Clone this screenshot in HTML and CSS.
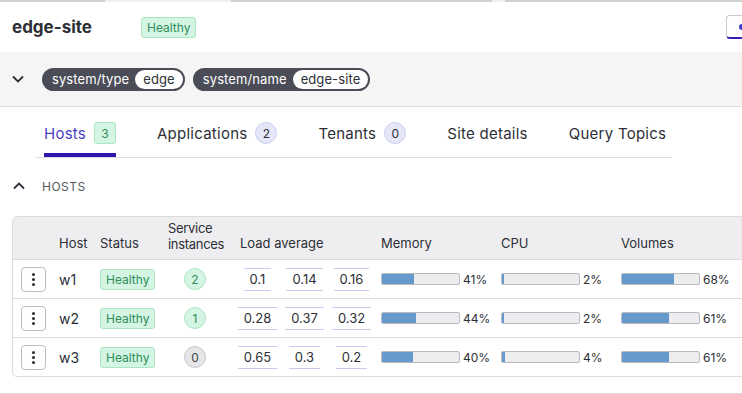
FILE: index.html
```html
<!DOCTYPE html>
<html lang="en">
<head>
    <meta charset="UTF-8">
    <meta name="viewport" content="width=device-width, initial-scale=1.0">
    <title>edge-site</title>
    <link rel="stylesheet" href="styles.css">
</head>
<body>
    <div class="top-strip">
        <span class="seg dark" style="width: 105px"></span>
        <span class="seg light" style="width: 126px"></span>
        <span class="seg dark" style="width: 261px"></span>
        <span class="seg light" style="width: 13px"></span>
        <span class="seg dark fill"></span>
    </div>

    <header class="site-head">
        <h1>edge-site</h1>
        <span class="badge ok">Healthy</span>
        <button class="corner-btn"><span class="dot"></span></button>
    </header>

    <div class="labels">
        <svg class="chev" width="12" height="8" viewBox="0 0 12 8"><polyline points="1,1.5 6,6.5 11,1.5" fill="none" stroke="#2d2f36" stroke-width="1.8"/></svg>
        <span class="chip"><span class="key">system/type</span><span class="val">edge</span></span>
        <span class="chip"><span class="key">system/name</span><span class="val">edge-site</span></span>
    </div>

    <nav class="tabs">
        <a class="tab active">Hosts <span class="count square">3</span></a>
        <a class="tab">Applications <span class="count round">2</span></a>
        <a class="tab">Tenants <span class="count round">0</span></a>
        <a class="tab">Site details</a>
        <a class="tab">Query Topics</a>
    </nav>

    <section class="hosts">
        <div class="section-title">
            <svg class="chev" width="12" height="8" viewBox="0 0 12 8"><polyline points="1,6.5 6,1.5 11,6.5" fill="none" stroke="#2d2f36" stroke-width="1.8"/></svg>
            <span>HOSTS</span>
        </div>

        <div class="grid">
            <div class="row head">
                <div class="cell"></div>
                <div class="cell">Host</div>
                <div class="cell">Status</div>
                <div class="cell tight">Service<br>instances</div>
                <div class="cell span3">Load average</div>
                <div class="cell">Memory</div>
                <div class="cell">CPU</div>
                <div class="cell">Volumes</div>
                <div class="cell"></div>
            </div>

            <div class="row">
                <div class="cell"><button class="menu"><i></i><i></i><i></i></button></div>
                <div class="cell host">w1</div>
                <div class="cell"><span class="badge ok">Healthy</span></div>
                <div class="cell"><span class="circle ok">2</span></div>
                <div class="cell load"><span>0.1</span></div>
                <div class="cell load"><span>0.14</span></div>
                <div class="cell load"><span>0.16</span></div>
                <div class="cell"><span class="bar"><span class="fill" style="width: 41%"></span></span><span class="pct">41%</span></div>
                <div class="cell"><span class="bar"><span class="fill" style="width: 2%"></span></span><span class="pct">2%</span></div>
                <div class="cell"><span class="bar"><span class="fill" style="width: 68%"></span></span><span class="pct">68%</span></div>
                <div class="cell"></div>
            </div>

            <div class="row">
                <div class="cell"><button class="menu"><i></i><i></i><i></i></button></div>
                <div class="cell host">w2</div>
                <div class="cell"><span class="badge ok">Healthy</span></div>
                <div class="cell"><span class="circle ok">1</span></div>
                <div class="cell load"><span>0.28</span></div>
                <div class="cell load"><span>0.37</span></div>
                <div class="cell load"><span>0.32</span></div>
                <div class="cell"><span class="bar"><span class="fill" style="width: 44%"></span></span><span class="pct">44%</span></div>
                <div class="cell"><span class="bar"><span class="fill" style="width: 2%"></span></span><span class="pct">2%</span></div>
                <div class="cell"><span class="bar"><span class="fill" style="width: 61%"></span></span><span class="pct">61%</span></div>
                <div class="cell"></div>
            </div>

            <div class="row">
                <div class="cell"><button class="menu"><i></i><i></i><i></i></button></div>
                <div class="cell host">w3</div>
                <div class="cell"><span class="badge ok">Healthy</span></div>
                <div class="cell"><span class="circle zero">0</span></div>
                <div class="cell load"><span>0.65</span></div>
                <div class="cell load"><span>0.3</span></div>
                <div class="cell load"><span>0.2</span></div>
                <div class="cell"><span class="bar"><span class="fill" style="width: 40%"></span></span><span class="pct">40%</span></div>
                <div class="cell"><span class="bar"><span class="fill" style="width: 4%"></span></span><span class="pct">4%</span></div>
                <div class="cell"><span class="bar"><span class="fill" style="width: 61%"></span></span><span class="pct">61%</span></div>
                <div class="cell"></div>
            </div>
        </div>
    </section>

    <div class="next-section"></div>
</body>
</html>
```

FILE: styles.css
```css
html {
    overflow: hidden;
}
body {
    margin: 0;
    width: 742px;
    font-family: Inter, 'Open Sans', sans-serif;
    color: #2d2f36;
    background: white;
}
.top-strip {
    display: flex;
    height: 2px;
}
.seg.dark {
    background: #cdd3d1;
}
.seg.light {
    background: #eef0ef;
}
.seg.fill {
    flex: 1;
}
.site-head {
    display: flex;
    align-items: center;
    height: 50px;
    padding-left: 12px;
    overflow: hidden;
}
.site-head h1 {
    width: 129px;
    margin: 0;
    font-size: 17px;
    font-weight: 700;
}
.badge {
    display: inline-flex;
    align-items: center;
    height: 21px;
    padding: 0 5px;
    box-sizing: border-box;
    border-radius: 3px;
    font-size: 12px;
}
.badge.ok {
    background: #d4f5e3;
    border: 1px solid #abe6c3;
    color: #2e8f58;
}
.corner-btn {
    margin-left: auto;
    margin-right: -22px;
    width: 38px;
    height: 24px;
    background: white;
    border: 1px solid #c9c9cf;
    border-bottom: 2px solid #3620b5;
    border-radius: 4px;
    padding: 0 0 0 12px;
    display: flex;
    align-items: center;
}
.corner-btn .dot {
    width: 6px;
    height: 6px;
    border-radius: 50%;
    background: #3a3bd0;
}
.labels {
    display: flex;
    align-items: center;
    height: 54px;
    padding-left: 12px;
    background: #f5f5f5;
    border-bottom: 1px solid #dcdcdc;
}
.labels .chev {
    margin-right: 18px;
}
.chip {
    display: inline-flex;
    align-items: center;
    height: 23px;
    box-sizing: border-box;
    margin-right: 8px;
    border: 2px solid #4a4d57;
    border-radius: 12px;
    background: #4a4d57;
    font-size: 13px;
    letter-spacing: 0.1px;
}
.chip .key {
    color: white;
    padding: 0 6px 0 8px;
}
.chip .val {
    display: inline-flex;
    align-items: center;
    height: 19px;
    padding: 0 8px;
    background: white;
    border-radius: 10px;
    color: #2d2f36;
}
.tabs {
    display: flex;
    gap: 41px;
    width: 636px;
    box-sizing: border-box;
    margin-left: 36px;
    padding: 0 8px;
    border-bottom: 1px solid #dcdcdc;
}
.tab {
    display: flex;
    flex-shrink: 0;
    align-items: center;
    gap: 8px;
    height: 40px;
    padding-top: 6px;
    border-bottom: 4px solid transparent;
    font-size: 15px;
    letter-spacing: 0.25px;
    white-space: nowrap;
    color: #2d2f36;
}
.tab.active {
    color: #4a3dc4;
    border-bottom-color: #2c18ad;
    border-radius: 2px 2px 0 0;
}
.count {
    display: inline-flex;
    align-items: center;
    justify-content: center;
    width: 22px;
    height: 22px;
    box-sizing: border-box;
    font-size: 12px;
    letter-spacing: 0;
}
.count.square {
    border-radius: 3px;
    background: #d4f5e3;
    border: 1px solid #abe6c3;
    color: #2e8f58;
}
.count.round {
    border-radius: 50%;
    background: #e5e7f8;
    border: 1px solid #cdd0f1;
    color: #2d2f36;
}
.section-title {
    display: flex;
    align-items: center;
    height: 16px;
    margin: 20px 0 22px 13px;
    font-size: 12px;
    letter-spacing: 0.5px;
    color: #55575e;
}
.section-title .chev {
    margin-right: 17px;
}
.grid {
    width: 760px;
    margin-left: 12px;
    border: 1px solid #dcdcdc;
    border-radius: 5px;
    overflow: hidden;
}
.row {
    display: grid;
    grid-template-columns: 40px 41px 68px 72px 47px 47px 47px 120px 120px 120px 1fr;
    align-items: center;
    height: 38px;
    border-top: 1px solid #dcdcdc;
    font-size: 13px;
}
.row.head {
    height: 42px;
    border-top: none;
    align-items: end;
    background: #eeeef0;
    line-height: 13px;
}
.cell {
    display: flex;
    align-items: center;
    padding-left: 6px;
    white-space: nowrap;
    min-width: 0;
}
.row.head .cell {
    display: block;
    padding-bottom: 9px;
}
.row.head .cell.tight {
    letter-spacing: -0.3px;
    line-height: 16px;
    padding-bottom: 7px;
}
.span3 {
    grid-column: span 3;
}
.cell.host {
    font-size: 14px;
}
.menu {
    display: flex;
    flex-direction: column;
    align-items: center;
    justify-content: center;
    gap: 2px;
    width: 25px;
    height: 25px;
    margin-left: 2px;
    padding: 0;
    background: white;
    border: 1px solid #bdbdc2;
    border-radius: 4px;
}
.menu i {
    width: 3px;
    height: 3px;
    border-radius: 50%;
    background: #2d2f36;
}
.circle {
    display: inline-flex;
    align-items: center;
    justify-content: center;
    width: 22px;
    height: 22px;
    margin-left: 16px;
    box-sizing: border-box;
    border-radius: 50%;
    font-size: 12px;
}
.circle.ok {
    background: #d4f5e3;
    border: 1px solid #abe6c3;
    color: #2e8f58;
}
.circle.zero {
    background: #e6e6e8;
    border: 1px solid #c9c9cc;
    color: #44464c;
}
.cell.load {
    justify-content: center;
    padding: 0;
}
.cell.load span {
    display: inline-block;
    line-height: 21px;
    padding: 0 6px;
    border-top: 1px solid #c7caf0;
    border-bottom: 1px solid #c7caf0;
}
.bar {
    display: inline-block;
    width: 79px;
    height: 12px;
    box-sizing: border-box;
    background: #ededf0;
    border: 1px solid #b9b9be;
    border-radius: 2px;
    overflow: hidden;
}
.bar .fill {
    display: block;
    height: 100%;
    background: #6699cc;
}
.pct {
    margin-left: 3px;
    font-size: 12px;
}
.next-section {
    margin-top: 16px;
    border-top: 1px solid #dcdcdc;
}
```
